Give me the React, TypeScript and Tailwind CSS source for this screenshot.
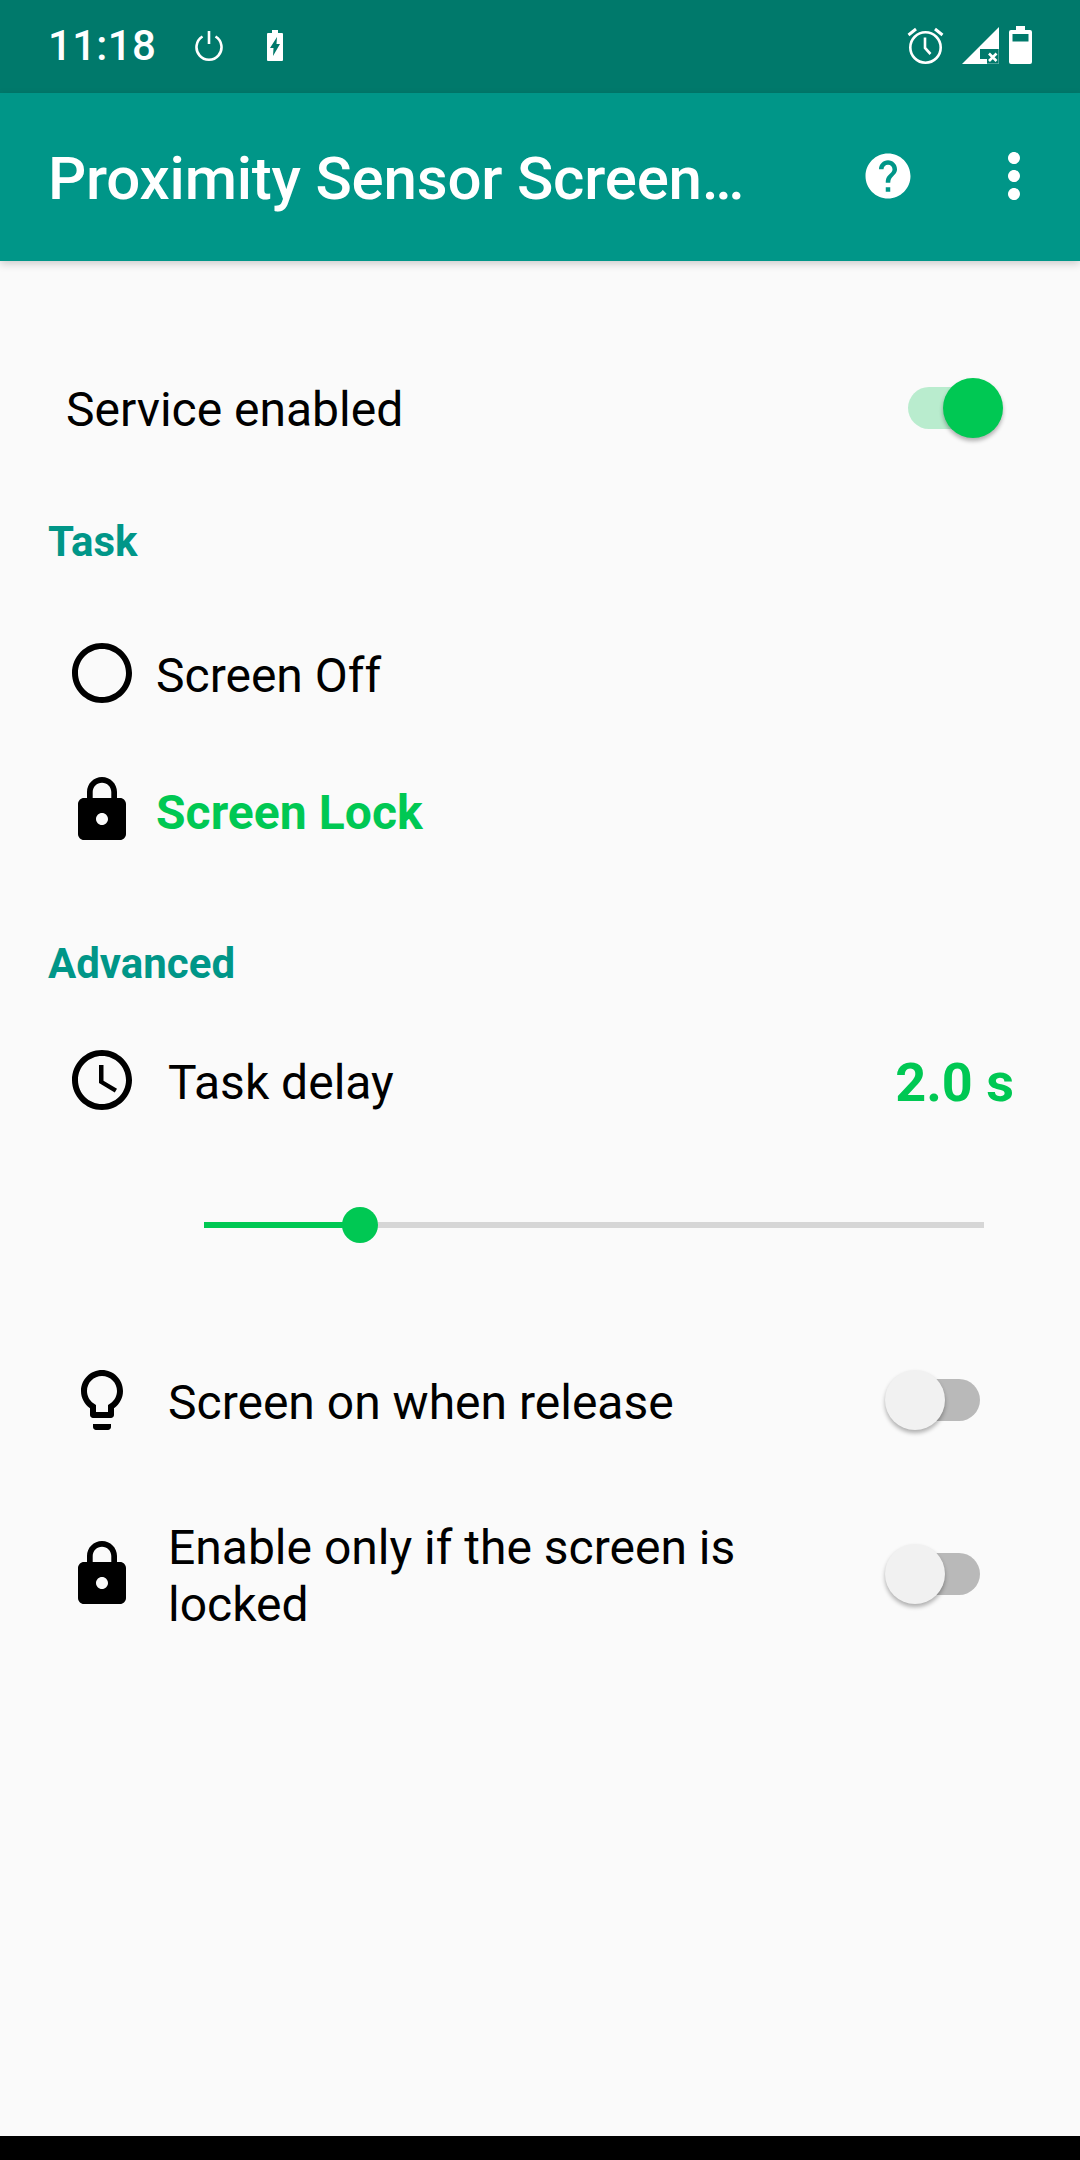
import * as React from 'react'

const LOCK = 'M18 8h-1V6c0-2.76-2.24-5-5-5S7 3.24 7 6v2H6c-1.1 0-2 .9-2 2v10c0 1.1.9 2 2 2h12c1.1 0 2-.9 2-2V10c0-1.1-.9-2-2-2zm-6 9c-1.1 0-2-.9-2-2s.9-2 2-2 2 .9 2 2-.9 2-2 2zm3.1-9H8.9V6c0-1.71 1.39-3.1 3.1-3.1 1.71 0 3.1 1.39 3.1 3.1v2z'
const CIRCLE = 'M12 2C6.48 2 2 6.48 2 12s4.48 10 10 10 10-4.48 10-10S17.52 2 12 2zm0 18c-4.42 0-8-3.58-8-8s3.58-8 8-8 8 3.58 8 8-3.58 8-8 8z'
const CLOCK = 'M11.99 2C6.47 2 2 6.48 2 12s4.47 10 9.99 10C17.52 22 22 17.52 22 12S17.52 2 11.99 2zM12 20c-4.42 0-8-3.58-8-8s3.58-8 8-8 8 3.58 8 8-3.58 8-8 8zM12.5 7H11v6l5.25 3.15.75-1.23-4.5-2.67z'
const BULB = 'M9 21c0 .55.45 1 1 1h4c.55 0 1-.45 1-1v-1H9v1zm3-19C8.14 2 5 5.14 5 9c0 2.38 1.19 4.47 3 5.74V17c0 .55.45 1 1 1h6c.55 0 1-.45 1-1v-2.26c1.81-1.27 3-3.36 3-5.74 0-3.86-3.14-7-7-7zm2.85 11.1l-.85.6V16h-4v-2.3l-.85-.6C7.8 12.16 7 10.63 7 9c0-2.76 2.24-5 5-5s5 2.24 5 5c0 1.63-.8 3.16-2.15 4.1z'
const HELP = 'M12 2C6.48 2 2 6.48 2 12s4.48 10 10 10 10-4.48 10-10S17.52 2 12 2zm1 17h-2v-2h2v2zm2.07-7.75l-.9.92C13.45 12.9 13 13.5 13 15h-2v-.5c0-1.1.45-2.1 1.17-2.83l1.24-1.26c.37-.36.59-.86.59-1.41 0-1.1-.9-2-2-2s-2 .9-2 2H8c0-2.21 1.79-4 4-4s4 1.79 4 4c0 .88-.36 1.68-.93 2.25z'
const MORE = 'M12 8c1.1 0 2-.9 2-2s-.9-2-2-2-2 .9-2 2 .9 2 2 2zm0 2c-1.1 0-2 .9-2 2s.9 2 2 2 2-.9 2-2-.9-2-2-2zm0 6c-1.1 0-2 .9-2 2s.9 2 2 2 2-.9 2-2-.9-2-2-2z'

function Icon({ d, className = 'w-[72px] h-[72px] shrink-0 text-black' }: { d: string; className?: string }) {
  return (
    <svg viewBox="0 0 24 24" className={className} fill="currentColor">
      <path d={d} />
    </svg>
  )
}

function Switch({ on }: { on?: boolean }) {
  return (
    <div className="relative w-[86px] h-[42px]">
      <div className={`w-full h-full rounded-full ${on ? 'bg-[#b9ecce]' : 'bg-[#b9b9b9]'}`} />
      <div
        className={`absolute top-[-9px] w-[60px] h-[60px] rounded-full shadow-[0_3px_4px_rgba(0,0,0,0.3)] ${
          on ? 'right-[-9px] bg-[#00c853]' : 'left-[-9px] bg-[#f1f1f1]'
        }`}
      />
    </div>
  )
}

function StatusBar() {
  return (
    <div className="h-[93px] bg-[#00796b] flex items-center text-white pl-[48px] pr-[48px] shrink-0">
      <span className="text-[42px] leading-none font-medium tracking-[0.3px] -mt-[1px]">11:18</span>
      {/* power */}
      <svg viewBox="0 0 28 30" className="w-[28px] h-[30px] ml-[39px] -mt-[2px]" fill="none" stroke="currentColor" strokeWidth="2.6">
        <path d="M7.5 5.5a12.5 12.5 0 1 0 13 0" />
        <path d="M14 0v13" />
      </svg>
      {/* battery charging */}
      <svg viewBox="0 0 16 31" className="w-[16px] h-[31px] ml-[44px] -mt-[2px]" fill="currentColor">
        <path fillRule="evenodd" d="M5 0h6v3h4a1 1 0 0 1 1 1v26a1 1 0 0 1-1 1H1a1 1 0 0 1-1-1V4a1 1 0 0 1 1-1h4zM10 7 3 18h3.5L6 26l7-12H9.5z" />
      </svg>
      <div className="flex-1" />
      {/* alarm */}
      <svg viewBox="0 0 37 37" className="w-[37px] h-[37px] -mt-[3px]" fill="none" stroke="currentColor" strokeWidth="2.6">
        <circle cx="18.5" cy="20.5" r="15.2" />
        <path d="M18 10.5v10.5l5.5 6" />
        <path d="M1.5 8 9 2M35.5 8 28 2" strokeWidth="3" />
      </svg>
      {/* signal, no sim */}
      <svg viewBox="0 0 37 37" className="w-[37px] h-[37px] ml-[18px] -mt-[3px]" fill="currentColor">
        <path d="M37 0v22H18v10h7v5H0z" />
        <path d="M25 36.7h11.7V22" fill="none" stroke="currentColor" strokeWidth="0.6" opacity="0.6" />
        <path d="M27 26.5l7.5 7.5M34.5 26.5l-7.5 7.5" fill="none" stroke="currentColor" strokeWidth="2.6" />
      </svg>
      {/* battery */}
      <svg viewBox="0 0 23 38" className="w-[23px] h-[38px] ml-[10px] -mt-[4px]" fill="currentColor">
        <path fillRule="evenodd" d="M7 0h9v4h5a2 2 0 0 1 2 2v30a2 2 0 0 1-2 2H2a2 2 0 0 1-2-2V6a2 2 0 0 1 2-2h5zM3.5 8v7.5h16V8z" />
      </svg>
    </div>
  )
}

export default function App() {
  return (
    <div className="h-[2160px] w-[1080px] flex flex-col bg-[#fafafa] text-black overflow-hidden font-['Roboto',sans-serif]">
      <StatusBar />
      <div className="relative h-[168px] bg-[#009688] flex items-center pl-[48px] text-white shrink-0 shadow-[0_3px_8px_rgba(0,0,0,0.18)]">
        <h1 className="text-[60px] font-medium leading-none tracking-[-0.2px] flex-1 mt-[3px]">Proximity Sensor Screen…</h1>
        <Icon d={HELP} className="w-[54px] h-[54px] mr-[63px] -mt-[3px]" />
        <Icon d={MORE} className="w-[72px] h-[72px] mr-[30px] -mt-[3px]" />
      </div>

      <div className="flex-1 flex flex-col pt-[97px]">
        <div className="h-[100px] flex items-center justify-between pl-[66px] pr-[86px]">
          <span className="text-[48px] leading-none mt-[3px]">Service enabled</span>
          <Switch on />
        </div>

        <h2 className="mt-[58px] h-[50px] pl-[48px] flex items-center text-[42px] font-bold text-[#009688]">Task</h2>

        <div className="mt-[71px] h-[72px] flex items-center pl-[66px]">
          <Icon d={CIRCLE} />
          <span className="ml-[18px] text-[48px] leading-none mt-[5px]">Screen Off</span>
        </div>
        <div className="mt-[65px] h-[72px] flex items-center pl-[66px]">
          <Icon d={LOCK} />
          <span className="ml-[18px] text-[48px] leading-none font-bold text-[#00c853] tracking-[0.05px] mt-[5px]">Screen Lock</span>
        </div>

        <h2 className="mt-[92px] h-[50px] pl-[48px] flex items-center text-[42px] font-bold text-[#009688]">Advanced</h2>

        <div className="mt-[56px] h-[72px] flex items-center pl-[66px] pr-[66px]">
          <Icon d={CLOCK} />
          <span className="ml-[30px] text-[48px] leading-none flex-1 mt-[5px]">Task delay</span>
          <span className="text-[54px] leading-none font-bold text-[#00c853] mt-[5px]">2.0 s</span>
        </div>

        <div className="mt-[91px] ml-[204px] w-[780px] h-[36px] flex items-center relative">
          <div className="h-[6px] w-[156px] bg-[#00c853]" />
          <div className="h-[6px] flex-1 bg-[#d6d6d6]" />
          <div className="absolute left-[138px] top-0 w-[36px] h-[36px] rounded-full bg-[#00c853]" />
        </div>

        <div className="mt-[121px] h-[72px] flex items-center pl-[66px] pr-[100px]">
          <Icon d={BULB} />
          <span className="ml-[30px] text-[48px] leading-none flex-1 mt-[5px]">Screen on when release</span>
          <Switch />
        </div>

        <div className="mt-[82px] h-[112px] flex items-center pl-[66px] pr-[100px]">
          <Icon d={LOCK} />
          <span className="ml-[30px] text-[48px] leading-[57px] flex-1 pr-[100px] mt-[4px]">Enable only if the screen is locked</span>
          <Switch />
        </div>
      </div>

      <div className="h-[24px] bg-black shrink-0" />
    </div>
  )
}
